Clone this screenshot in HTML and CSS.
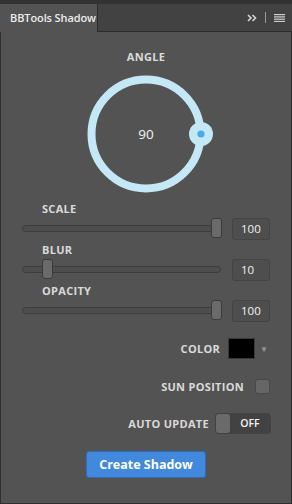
FILE: index.html
```html
<!DOCTYPE html>
<html lang="en">
  <head>
    <meta charset="UTF-8">
    <title>BBTools Shadow</title>
    <link rel="stylesheet" href="styles.css">
  </head>
  <body>
  <div class="tabbar">
    <div class="tab">BBTools Shadow</div>
    <div class="tab-tools">
      <svg class="chevrons" width="10" height="8" viewBox="0 0 10 8">
        <path d="M1 1 L4 4 L1 7 M5.5 1 L8.5 4 L5.5 7" fill="none" stroke="#d6d6d6" stroke-width="1.6"/>
      </svg>
      <span class="divider"></span>
      <svg class="menu" width="11" height="8" viewBox="0 0 11 8">
        <rect x="0" y="0" width="11" height="1.2" fill="#cfcfcf"/>
        <rect x="0" y="2.3" width="11" height="1.2" fill="#cfcfcf"/>
        <rect x="0" y="4.6" width="11" height="1.2" fill="#cfcfcf"/>
        <rect x="0" y="6.9" width="11" height="1.2" fill="#cfcfcf"/>
      </svg>
    </div>
  </div>

  <div class="panel">
    <div class="label angle-label">ANGLE</div>
    <div class="dial">
      <svg width="136" height="124" viewBox="0 0 136 124">
        <circle cx="68" cy="62" r="54.5" fill="none" stroke="#c5e8f7" stroke-width="8"/>
        <circle cx="123" cy="62" r="12" fill="#c5e8f7"/>
        <circle cx="123" cy="62" r="3.6" fill="#45ade6"/>
      </svg>
      <span class="dial-value">90</span>
    </div>

    <div class="field first">
      <div class="label field-label">SCALE</div>
      <div class="field-row">
        <div class="track"><div class="thumb" style="left: 188px"></div></div>
        <div class="value-box">100</div>
      </div>
    </div>
    <div class="field">
      <div class="label field-label">BLUR</div>
      <div class="field-row">
        <div class="track"><div class="thumb" style="left: 18.8px"></div></div>
        <div class="value-box">10</div>
      </div>
    </div>
    <div class="field">
      <div class="label field-label">OPACITY</div>
      <div class="field-row">
        <div class="track"><div class="thumb" style="left: 188px"></div></div>
        <div class="value-box">100</div>
      </div>
    </div>

    <div class="option color-row">
      <span class="label">COLOR</span>
      <span class="swatch"></span>
      <span class="caret">&#9660;</span>
    </div>
    <div class="option sun-row">
      <span class="label">SUN POSITION</span>
      <span class="checkbox"></span>
    </div>
    <div class="option update-row">
      <span class="label">AUTO UPDATE</span>
      <span class="toggle"><span class="toggle-knob"></span><span class="toggle-text">OFF</span></span>
    </div>

    <div class="actions">
      <button class="create-btn">Create Shadow</button>
    </div>
  </div>
</body>
</html>
```

FILE: styles.css
```css
html, body {
  margin: 0;
  padding: 0;
}

body {
  width: 292px;
  height: 504px;
  background: #323232;
  font-family: "Open Sans", "Noto Sans", sans-serif;
  color: #dedede;
  padding-top: 4px;
  box-sizing: border-box;
  display: flex;
  flex-direction: column;
}

.tabbar {
  height: 27px;
  background: #424242;
  border-bottom: 1px solid #2c2c2c;
  display: flex;
  align-items: stretch;
}

.tab {
  width: 98px;
  background: #535353;
  border-right: 1px solid #2c2c2c;
  margin-bottom: -1px;
  box-sizing: border-box;
  padding-left: 10px;
  font-size: 11px;
  font-weight: 600;
  color: #ececec;
  line-height: 27px;
  letter-spacing: -0.1px;
}

.tab-tools {
  margin-left: auto;
  display: flex;
  align-items: center;
  padding-right: 7px;
}

.chevrons {
  margin-right: 8px;
}

.divider {
  width: 1px;
  height: 11px;
  background: #9a9a9a;
  margin-right: 8px;
}

.panel {
  flex: 1;
  background: #535353;
  border: 1px solid #2f2f2f;
  border-top: none;
  display: flex;
  flex-direction: column;
}

.label {
  font-size: 11px;
  font-weight: 700;
  letter-spacing: 0.3px;
  color: #dadada;
  line-height: 14px;
}

.angle-label {
  text-align: center;
  margin-top: 18px;
}

.dial {
  margin-top: 8px;
  align-self: center;
  width: 136px;
  height: 124px;
  display: grid;
}

.dial svg,
.dial-value {
  grid-area: 1 / 1;
}

.dial-value {
  align-self: center;
  justify-self: center;
  font-size: 13.5px;
  color: #f4f4f4;
}

.field {
  margin-top: 3px;
  padding: 0 21px 0 21px;
}

.field.first {
  margin-top: 6px;
}

.field-label {
  padding-left: 20px;
}

.field-row {
  margin-top: 2px;
  height: 22px;
  display: flex;
  align-items: center;
  gap: 11px;
}

.track {
  position: relative;
  width: 199px;
  height: 7px;
  box-sizing: border-box;
  background: #4d4d4d;
  border: 1px solid #3d3d3d;
  border-radius: 4px;
  margin-top: -2px;
}

.thumb {
  position: absolute;
  top: -8px;
  width: 11px;
  height: 20px;
  box-sizing: border-box;
  background: #6a6a6a;
  border: 1px solid #3b3b3b;
  border-radius: 3px;
}

.value-box {
  width: 38px;
  height: 22px;
  box-sizing: border-box;
  border: 1px solid #444;
  background: #4e4e4e;
  border-radius: 3px;
  font-size: 11.5px;
  color: #f2f2f2;
  line-height: 20px;
  padding-left: 8px;
}

.option {
  display: flex;
  justify-content: flex-end;
  align-items: center;
  padding-right: 21px;
}

.color-row {
  margin-top: 16px;
  height: 21px;
  padding-right: 23px;
}

.swatch {
  width: 27px;
  height: 21px;
  box-sizing: border-box;
  background: #000;
  border: 1px solid #3a3a3a;
  margin-left: 8px;
}

.caret {
  font-size: 8px;
  color: #9a9a9a;
  margin-left: 5px;
}

.sun-row {
  margin-top: 20px;
  height: 15px;
}

.checkbox {
  width: 15px;
  height: 15px;
  box-sizing: border-box;
  background: #666;
  border: 1px solid #484848;
  border-radius: 3px;
  margin-left: 11px;
}

.update-row {
  margin-top: 19px;
  height: 21px;
  padding-right: 20px;
}

.toggle {
  margin-left: 6px;
  width: 56px;
  height: 21px;
  box-sizing: border-box;
  background: #424242;
  border-radius: 4px;
  display: flex;
  align-items: center;
  padding: 1px;
}

.toggle-knob {
  width: 14px;
  height: 19px;
  background: #6a6a6a;
  border-radius: 3px;
}

.toggle-text {
  flex: 1;
  text-align: center;
  font-size: 10.5px;
  font-weight: 600;
  color: #f2f2f2;
  margin-top: -2px;
}

.actions {
  margin-top: 17px;
  display: flex;
  justify-content: center;
}

.create-btn {
  width: 120px;
  height: 27px;
  background: #4289dd;
  border: 1px solid #2e6cb5;
  border-radius: 3px;
  color: #fff;
  font-family: "Open Sans", "Noto Sans", sans-serif;
  font-size: 12.5px;
  font-weight: 700;
  padding: 0;
}
```
